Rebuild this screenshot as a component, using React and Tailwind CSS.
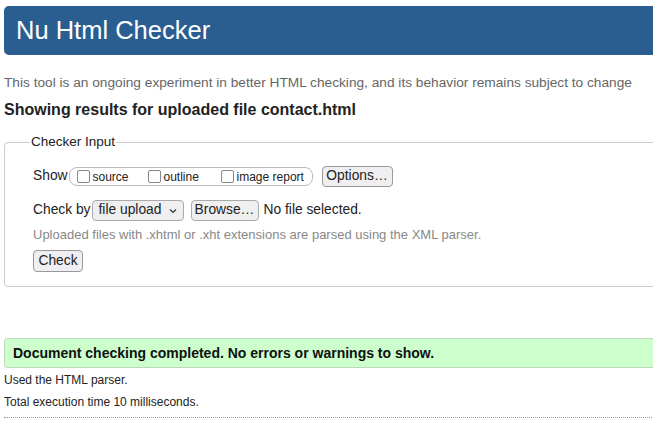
export default function App() {
  const font = { fontFamily: '"Liberation Sans", Arial, Helvetica, sans-serif' };
  return (
    <div className="w-[653px] h-[423px] overflow-hidden bg-white text-black" style={font}>
      <div className="flex flex-col pl-[4px] pt-[6px]">
        <div className="h-[49px] w-[700px] rounded-l-[5px] bg-[#2a5e91] flex items-center pl-[12px]">
          <span className="text-[25.5px] text-white leading-none">Nu Html Checker</span>
        </div>
        <p className="mt-[20px] text-[13.7px] leading-[16px] text-[#666]">
          This tool is an ongoing experiment in better HTML checking, and its behavior remains subject to change
        </p>
        <h2 className="mt-[9px] text-[16px] leading-[20px] font-bold text-[#222]">
          Showing results for uploaded file contact.html
        </h2>
        <fieldset className="mt-[14px] w-[700px] h-[153px] border border-[#ccc] rounded-[4px] pl-[28px] pt-0">
          <legend className="text-[13.5px] leading-[16px] text-[#222] px-[1px] -ml-[3px]">Checker Input</legend>
          <div className="mt-[16px] flex items-center h-[21px] text-[13.8px] text-[#222]">
            <span>Show</span>
            <div className="ml-[1px] w-[244px] h-[19px] border border-[#bbb] rounded-[8px] flex items-center pl-[7px] text-[12px]">
              <span className="w-[13px] h-[13px] border border-[#888] rounded-[2px] bg-white"></span>
              <span className="ml-[3px] w-[55px]">source</span>
              <span className="w-[13px] h-[13px] border border-[#888] rounded-[2px] bg-white"></span>
              <span className="ml-[3px] w-[57px]">outline</span>
              <span className="w-[13px] h-[13px] border border-[#888] rounded-[2px] bg-white"></span>
              <span className="ml-[3px]">image report</span>
            </div>
            <span className="ml-[9px] h-[21px] w-[71px] border border-[#999] rounded-[4px] bg-[#efeff1] flex items-center justify-center">Options…</span>
          </div>
          <div className="mt-[13px] flex items-center h-[21px] text-[13.8px] text-[#222]">
            <span>Check by</span>
            <span className="ml-[1px] h-[21px] w-[92px] px-[6px] border border-[#aaa] rounded-[4px] bg-[#efeff1] flex items-center justify-between">
              <span>file upload</span>
              <svg width="8" height="6" viewBox="0 0 8 6"><path d="M1 1.5 L4 4.5 L7 1.5" fill="none" stroke="#333" strokeWidth="1.2" /></svg>
            </span>
            <span className="ml-[7px] h-[21px] w-[68px] border border-[#aaa] rounded-[4px] bg-[#efeff1] flex items-center justify-center">Browse…</span>
            <span className="ml-[5px]">No file selected.</span>
          </div>
          <p className="mt-[6px] text-[13px] leading-[16px] text-[#888]">
            Uploaded files with .xhtml or .xht extensions are parsed using the XML parser.
          </p>
          <div className="mt-[7px] flex">
            <span className="h-[22px] w-[50px] border border-[#999] rounded-[4px] bg-[#efeff1] flex items-center justify-center text-[13.8px] text-[#222]">Check</span>
          </div>
        </fieldset>
        <div className="mt-[51px] w-[700px] h-[30px] bg-[#ccffcc] border border-[#bcd9bc] rounded-l-[3px] flex items-center pl-[8px]">
          <span className="text-[14px] font-bold text-[#111]">Document checking completed. No errors or warnings to show.</span>
        </div>
        <p className="mt-[5px] text-[12px] leading-[14px] text-[#222]">Used the HTML parser.</p>
        <p className="mt-[8px] text-[12px] leading-[14px] text-[#222]">Total execution time 10 milliseconds.</p>
        <div className="mt-[8px] w-[700px] border-t border-dotted border-[#999]"></div>
      </div>
    </div>
  );
}
